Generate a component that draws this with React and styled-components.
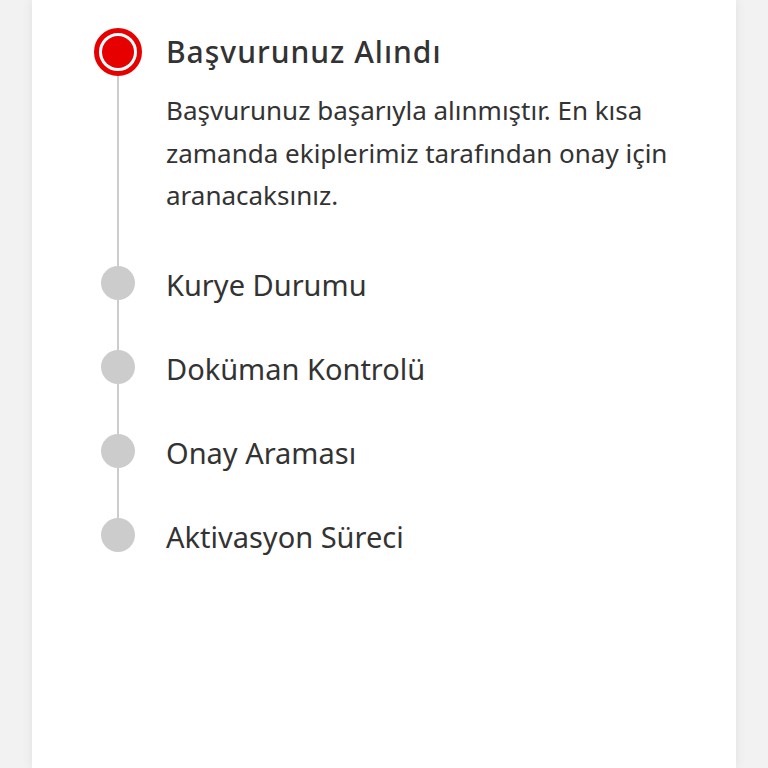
import React from 'react';
import styled, { createGlobalStyle } from 'styled-components';

const GlobalStyle = createGlobalStyle`
  html, body {
    margin: 0;
    padding: 0;
    background: #f2f2f2;
  }
  body {
    font-family: "Noto Sans", "Open Sans", sans-serif;
    color: #333333;
  }
`;

const Page = styled.div`
  height: 768px;
  overflow: hidden;
  padding: 0 32px;
  display: flex;
`;

const Card = styled.div`
  flex: 1;
  background: #ffffff;
  box-shadow: 0 0 10px rgba(0, 0, 0, 0.08);
  padding: 28px 0 0 62px;
`;

const Steps = styled.ol`
  list-style: none;
  margin: 0;
  padding: 0;
`;

const Step = styled.li`
  display: flex;
  gap: 24px;
`;

const Rail = styled.div`
  width: 48px;
  flex: none;
  display: flex;
  flex-direction: column;
  align-items: center;
`;

const ActiveMarker = styled.div`
  width: 48px;
  height: 48px;
  box-sizing: border-box;
  border-radius: 50%;
  border: 5px solid #e60000;
  padding: 3px;
  flex: none;

  &::after {
    content: '';
    display: block;
    width: 100%;
    height: 100%;
    border-radius: 50%;
    background: #e60000;
  }
`;

const Dot = styled.div`
  width: 34px;
  height: 34px;
  border-radius: 50%;
  background: #cccccc;
  flex: none;
`;

const Line = styled.div`
  flex: 1;
  width: 2px;
  background: #cccccc;
  visibility: ${p => (p.$hidden ? 'hidden' : 'visible')};
`;

const Body = styled.div`
  padding-bottom: ${p => p.$pad}px;
  min-width: 0;
`;

const Title = styled.div`
  font-size: ${p => (p.$active ? 30 : 29)}px;
  font-weight: ${p => (p.$active ? 500 : 400)};
  line-height: ${p => (p.$active ? 48 : 30)}px;
  color: #333333;
  letter-spacing: ${p => (p.$active ? '1px' : '0')};
  ${p => !p.$active && 'padding-top: 4px;'}
`;

const Description = styled.p`
  margin: 13px 0 0;
  font-size: 26px;
  line-height: 42.5px;
  color: #333333;
  max-width: 520px;
`;

const steps = [
  {
    title: 'Başvurunuz Alındı',
    text: 'Başvurunuz başarıyla alınmıştır. En kısa zamanda ekiplerimiz tarafından onay için aranacaksınız.',
    active: true,
  },
  { title: 'Kurye Durumu' },
  { title: 'Doküman Kontrolü' },
  { title: 'Onay Araması' },
  { title: 'Aktivasyon Süreci' },
];

export default function App() {
  return (
    <>
      <GlobalStyle />
      <Page>
        <Card>
          <Steps>
            {steps.map((s, i) => {
              const last = i === steps.length - 1;
              return (
                <Step key={s.title}>
                  <Rail>
                    {s.active ? <ActiveMarker /> : <Dot />}
                    <Line $hidden={last} />
                  </Rail>
                  <Body $pad={s.active ? 49 : 50}>
                    <Title $active={s.active}>{s.title}</Title>
                    {s.text && <Description>{s.text}</Description>}
                  </Body>
                </Step>
              );
            })}
          </Steps>
        </Card>
      </Page>
    </>
  );
}
